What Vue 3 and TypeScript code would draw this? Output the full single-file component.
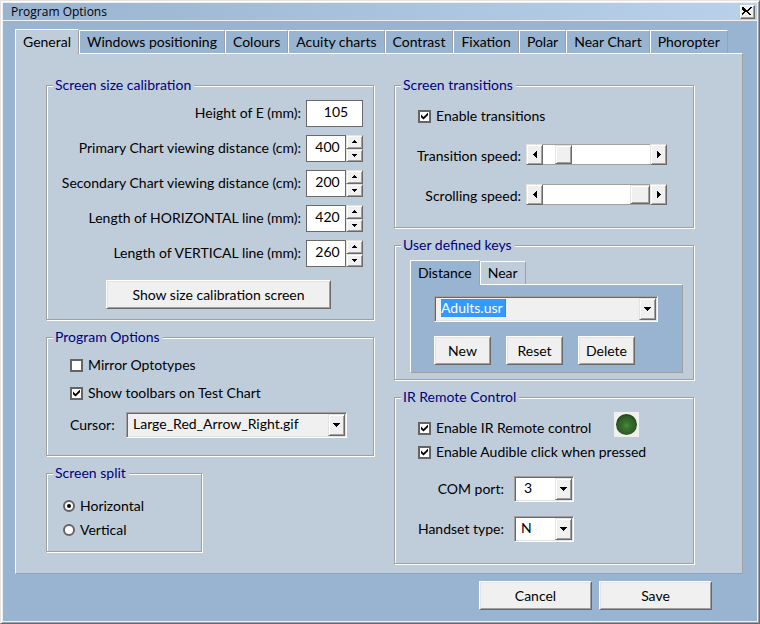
<script setup lang="ts">
import { reactive, ref } from 'vue'

interface Distance {
  id: string
  label: string
  value: number
  stepper: boolean
}

const tabs: string[] = [
  'General', 'Windows positioning', 'Colours', 'Acuity charts', 'Contrast',
  'Fixation', 'Polar', 'Near Chart', 'Phoropter',
]
const activeTab = ref('General')

const distances = reactive<Distance[]>([
  { id: 'height-e', label: 'Height of E (mm):', value: 105, stepper: false },
  { id: 'primary', label: 'Primary Chart viewing distance (cm):', value: 400, stepper: true },
  { id: 'secondary', label: 'Secondary Chart viewing distance (cm):', value: 200, stepper: true },
  { id: 'horizontal', label: 'Length of HORIZONTAL line (mm):', value: 420, stepper: true },
  { id: 'vertical', label: 'Length of VERTICAL line (mm):', value: 260, stepper: true },
])

const speeds = reactive([
  { id: 'transition', label: 'Transition speed:', value: 13, wide: false },
  { id: 'scrolling', label: 'Scrolling speed:', value: 100, wide: true },
])

const mirror = ref(false)
const toolbars = ref(true)
const cursor = ref('Large_Red_Arrow_Right.gif')
const split = ref('horizontal')
const transitions = ref(true)
const keyTab = ref('Distance')
const keyFile = ref('Adults.usr')
const remote = ref(true)
const click = ref(true)
const port = ref('3')
const handset = ref('N')

function nudge(speed: { value: number }, by: number): void {
  speed.value = Math.min(100, Math.max(0, speed.value + by))
}
</script>

<template>
  <div class="window">
    <header class="titlebar">
      <span class="title">Program Options</span>
      <button class="close" type="button" aria-label="Close">
        <svg width="10" height="8" viewBox="0 0 10 8" shape-rendering="crispEdges">
          <path d="M0 0h2v1h1v1h1v1h2v-1h1v-1h1v-1h2v1h-1v1h-1v1h-1v1h-1v1h1v1h1v1h1v1h-2v-1h-1v-1h-1v-1h-2v1h-1v1h-1v1h-2v-1h1v-1h1v-1h1v-1h-1v-1h-1v-1h-1z" />
        </svg>
      </button>
    </header>

    <main class="content">
      <div class="tabs" role="tablist">
        <button
          v-for="tab in tabs" :key="tab" type="button" role="tab" class="tab"
          :class="{ active: tab === activeTab }" :aria-selected="tab === activeTab"
          @click="activeTab = tab"
        >{{ tab }}</button>
      </div>

      <section class="panel">
        <div class="column">
          <fieldset>
            <legend>Screen size calibration</legend>
            <div class="distances">
              <div v-for="d in distances" :key="d.id" class="distance">
                <label :for="d.id">{{ d.label }}</label>
                <div class="number">
                  <input :id="d.id" v-model.number="d.value" type="text" inputmode="numeric">
                  <div v-if="d.stepper" class="stepper">
                    <button type="button" class="raised" aria-label="Increase" @click="d.value++">
                      <svg width="5" height="3" viewBox="0 0 5 3" shape-rendering="crispEdges"><path d="M2 0h1v1h1v1h1v1h-5v-1h1v-1h1z" /></svg>
                    </button>
                    <button type="button" class="raised" aria-label="Decrease" @click="d.value--">
                      <svg width="5" height="3" viewBox="0 0 5 3" shape-rendering="crispEdges"><path d="M0 0h5v1h-1v1h-1v1h-1v-1h-1v-1h-1z" /></svg>
                    </button>
                  </div>
                </div>
              </div>
            </div>
            <button type="button" class="button calibrate">Show size calibration screen</button>
          </fieldset>

          <fieldset>
            <legend>Program Options</legend>
            <div class="options">
              <label class="check"><input v-model="mirror" type="checkbox">Mirror Optotypes</label>
              <label class="check"><input v-model="toolbars" type="checkbox">Show toolbars on Test Chart</label>
              <div class="cursor-row">
                <label for="cursor">Cursor:</label>
                <div class="combo">
                  <select id="cursor" v-model="cursor"><option>Large_Red_Arrow_Right.gif</option></select>
                  <span class="arrow raised"><svg width="7" height="4" viewBox="0 0 7 4" shape-rendering="crispEdges"><path d="M0 0h7v1h-1v1h-1v1h-1v1h-1v-1h-1v-1h-1v-1h-1z" /></svg></span>
                </div>
              </div>
            </div>
          </fieldset>

          <fieldset class="split">
            <legend>Screen split</legend>
            <div class="radios">
              <label class="check"><input v-model="split" type="radio" name="split" value="horizontal">Horizontal</label>
              <label class="check"><input v-model="split" type="radio" name="split" value="vertical">Vertical</label>
            </div>
          </fieldset>
        </div>

        <div class="column">
          <fieldset>
            <legend>Screen transitions</legend>
            <div class="transitions">
              <label class="check"><input v-model="transitions" type="checkbox">Enable transitions</label>
              <div v-for="s in speeds" :key="s.id" class="speed">
                <label :for="s.id">{{ s.label }}</label>
                <div class="scroll">
                  <button type="button" class="raised" aria-label="Slower" @click="nudge(s, -5)">
                    <svg width="4" height="7" viewBox="0 0 4 7" shape-rendering="crispEdges"><path d="M3 0h1v7h-1v-1h-1v-1h-1v-1h-1v-1h1v-1h1v-1h1z" /></svg>
                  </button>
                  <input :id="s.id" v-model.number="s.value" type="range" min="0" max="100" :class="{ wide: s.wide }">
                  <button type="button" class="raised" aria-label="Faster" @click="nudge(s, 5)">
                    <svg width="4" height="7" viewBox="0 0 4 7" shape-rendering="crispEdges"><path d="M0 0h1v1h1v1h1v1h1v1h-1v1h-1v1h-1v1h-1z" /></svg>
                  </button>
                </div>
              </div>
            </div>
          </fieldset>

          <fieldset>
            <legend>User defined keys</legend>
            <div class="keys">
              <div class="tabs" role="tablist">
                <button
                  v-for="tab in ['Distance', 'Near']" :key="tab" type="button" role="tab" class="tab"
                  :class="{ active: tab === keyTab }" :aria-selected="tab === keyTab"
                  @click="keyTab = tab"
                >{{ tab }}</button>
              </div>
              <div class="keys-panel">
                <div class="combo">
                  <select v-model="keyFile" class="selected" aria-label="Key file"><option>Adults.usr</option></select>
                  <span class="arrow raised"><svg width="7" height="4" viewBox="0 0 7 4" shape-rendering="crispEdges"><path d="M0 0h7v1h-1v1h-1v1h-1v1h-1v-1h-1v-1h-1v-1h-1z" /></svg></span>
                </div>
                <div class="key-buttons">
                  <button type="button" class="button">New</button>
                  <button type="button" class="button">Reset</button>
                  <button type="button" class="button">Delete</button>
                </div>
              </div>
            </div>
          </fieldset>

          <fieldset>
            <legend>IR Remote Control</legend>
            <div class="remote">
              <div class="remote-top">
                <div class="remote-checks">
                  <label class="check"><input v-model="remote" type="checkbox">Enable IR Remote control</label>
                  <label class="check"><input v-model="click" type="checkbox">Enable Audible click when pressed</label>
                </div>
                <svg class="led" width="25" height="25" viewBox="0 0 25 25">
                  <defs>
                    <radialGradient id="led-fill" cx="50%" cy="55%" r="52%">
                      <stop offset="0" stop-color="#4a8a40" />
                      <stop offset="0.35" stop-color="#37702d" />
                      <stop offset="0.8" stop-color="#2f5c25" />
                      <stop offset="1" stop-color="#23421e" />
                    </radialGradient>
                  </defs>
                  <rect width="25" height="25" fill="#f0f0f0" />
                  <circle cx="12.5" cy="12.5" r="10.5" fill="url(#led-fill)" />
                </svg>
              </div>
              <div class="remote-row">
                <label for="port">COM port:</label>
                <div class="combo white">
                  <select id="port" v-model="port" class="numeric"><option>3</option></select>
                  <span class="arrow raised"><svg width="7" height="4" viewBox="0 0 7 4" shape-rendering="crispEdges"><path d="M0 0h7v1h-1v1h-1v1h-1v1h-1v-1h-1v-1h-1v-1h-1z" /></svg></span>
                </div>
              </div>
              <div class="remote-row">
                <label for="handset">Handset type:</label>
                <div class="combo white">
                  <select id="handset" v-model="handset"><option>N</option></select>
                  <span class="arrow raised"><svg width="7" height="4" viewBox="0 0 7 4" shape-rendering="crispEdges"><path d="M0 0h7v1h-1v1h-1v1h-1v1h-1v-1h-1v-1h-1v-1h-1z" /></svg></span>
                </div>
              </div>
            </div>
          </fieldset>
        </div>
      </section>
    </main>

    <footer class="footer">
      <button type="button" class="button">Cancel</button>
      <button type="button" class="button">Save</button>
    </footer>
  </div>
</template>

<style>
body {
  background: #99b4d1;
}
</style>

<style scoped>
* {
  box-sizing: border-box;
}

.window {
  --blue: #99b4d1;
  --panel: #bfcddb;
  --face: #f0f0f0;
  --shade: #a0a0a0;
  --dark: #696969;
  --lite: #e3e3e3;
  display: flex;
  flex-direction: column;
  min-height: 100vh;
  padding: 2px;
  border: 1px solid;
  border-color: var(--lite) var(--dark) var(--dark) var(--lite);
  box-shadow: inset 1px 1px #fff, inset -1px -1px var(--shade), inset 2px 2px var(--face), inset -2px -2px var(--face);
  background: var(--blue);
  color: #000;
  font: 14px/18px Lato, "Open Sans", sans-serif;
}

button, input, select {
  margin: 0;
  padding: 0;
  border: 0;
  border-radius: 0;
  color: #000;
  font: inherit;
}

.titlebar {
  display: flex;
  align-items: center;
  justify-content: space-between;
  height: 18px;
  padding: 0 2px 0 8px;
  border-bottom: 1px solid var(--face);
  background: linear-gradient(90deg, #99b4d1, #b9d1ea);
}

.title {
  font: 12px/16px "Open Sans", sans-serif;
}

.close {
  display: grid;
  place-items: center;
  width: 15px;
  height: 14px;
  padding: 0 1px 1px 0;
  border: 1px solid;
  border-color: #fff var(--dark) var(--dark) #fff;
  box-shadow: inset -1px -1px var(--shade);
  background: var(--face);
}

.content {
  flex: 1;
  display: flex;
  flex-direction: column;
  padding: 8px 14px 0 12px;
}

.tabs {
  display: flex;
  align-items: flex-end;
}

.tab {
  height: 23px;
  padding: 0 7px;
  border: 1px solid #fff;
  border-right-color: var(--shade);
  border-bottom: 0;
  border-radius: 1px 1px 0 0;
  background: var(--blue);
  white-space: nowrap;
}

.tab.active {
  z-index: 1;
  height: 25px;
  margin-bottom: -1px;
  background: var(--panel);
}

.panel {
  flex: 1;
  display: grid;
  grid-template-columns: 328fr 300fr;
  gap: 20px;
  padding: 22px 48px 9px 30px;
  border: 1px solid;
  border-color: #fff var(--shade) var(--shade) #fff;
  background: var(--panel);
}

.column {
  display: flex;
  flex-direction: column;
  gap: 8px;
}

fieldset {
  min-width: 0;
  margin: 0;
  padding: 0 10px 6px 6px;
  border: 1px solid var(--shade);
  box-shadow: 1px 1px #fff, inset 1px 1px #fff;
}

legend {
  height: 18px;
  padding: 0 3px 0 2px;
  background: var(--panel);
  color: #000080;
}

.distances {
  display: grid;
  gap: 8px;
  padding-top: 6px;
}

.distance {
  display: grid;
  grid-template-columns: 1fr 57px;
  gap: 5px;
  align-items: center;
}

.distance label {
  padding-bottom: 2px;
  text-align: right;
  white-space: nowrap;
}

.number {
  display: flex;
  height: 27px;
}

.number input {
  flex: 1;
  width: 0;
  padding: 0 0 3px 3px;
  border: 1px solid var(--dark);
  background: #fff;
  text-align: center;
}

.stepper {
  display: grid;
  grid-template-rows: 1fr 1fr;
  width: 17px;
}

.raised {
  display: grid;
  place-items: center;
  border: 1px solid;
  border-color: var(--lite) var(--dark) var(--dark) var(--lite);
  box-shadow: inset 1px 1px #fff, inset -1px -1px var(--shade);
  background: var(--face);
}

.button {
  height: 29px;
  border: 1px solid;
  border-color: #fff var(--dark) var(--dark) #fff;
  box-shadow: inset 1px 1px var(--lite), inset -1px -1px var(--shade);
  background: var(--face);
}

.calibrate {
  display: block;
  width: 225px;
  margin: 13px 32px 4px auto;
}

.check {
  display: flex;
  align-items: center;
  gap: 5px;
  white-space: nowrap;
}

.check input {
  appearance: none;
  display: grid;
  place-items: center;
  flex: none;
  width: 13px;
  height: 13px;
  border: 2px solid #646464;
  background: #fff;
}

.check input[type="checkbox"]:checked::before {
  content: "";
  width: 7px;
  height: 7px;
  background: #000;
  clip-path: polygon(0 29%, 36% 64%, 100% 0, 100% 40%, 36% 100%, 0 68%);
}

.check input[type="radio"] {
  width: 12px;
  height: 12px;
  border-radius: 50%;
}

.check input[type="radio"]:checked::before {
  content: "";
  width: 4px;
  height: 4px;
  border-radius: 50%;
  background: #000;
}

.options {
  display: grid;
  gap: 10px;
  padding: 10px 16px 11px 17px;
}

.cursor-row {
  display: flex;
  align-items: center;
  justify-content: space-between;
}

.cursor-row .combo {
  width: 221px;
}

.combo {
  display: grid;
  grid-template-columns: 1fr 17px;
  height: 26px;
  padding: 1px;
  border: 1px solid;
  border-color: var(--shade) #fff #fff var(--shade);
  box-shadow: inset 1px 1px var(--dark), inset -1px -1px var(--lite);
  background: var(--face);
}

.combo select {
  grid-area: 1 / 1 / 2 / 3;
  appearance: none;
  min-width: 0;
  padding: 0 17px 2px 5px;
  background: transparent;
}

.combo select.numeric {
  padding-left: 8px;
}

.combo select.selected {
  background: linear-gradient(90deg, #39f 64px, #c60 64px) no-repeat 5px 1px / 65px 18px;
  color: #fff;
}

.selected option {
  color: #000;
}

.arrow {
  grid-area: 1 / 2;
  pointer-events: none;
}

.combo.white {
  width: 60px;
  background: #fff;
}

.split {
  width: 156px;
}

.radios {
  display: grid;
  gap: 6px;
  padding: 15px 0 6px 10px;
}

.transitions {
  padding: 13px 10px 16px 17px;
}

.speed {
  display: flex;
  align-items: center;
  justify-content: space-between;
  padding-top: 19px;
}

.speed label {
  flex: 1;
  padding: 3px 5px 0 0;
  margin-left: -10px;
  text-align: right;
}

.scroll {
  display: flex;
  flex: none;
  width: 141px;
  height: 21px;
  margin-right: 6px;
}

.scroll button {
  width: 17px;
}

.scroll input {
  flex: 1;
  width: 0;
  appearance: none;
  border: 1px solid;
  border-color: var(--shade) transparent var(--shade);
  border-width: 1px 0;
  background: #fff;
}

.scroll input::-webkit-slider-thumb {
  appearance: none;
  width: 17px;
  height: 19px;
  border: 1px solid;
  border-color: var(--lite) var(--dark) var(--dark) var(--lite);
  box-shadow: inset 1px 1px #fff, inset -1px -1px var(--shade);
  background: var(--face);
}

.scroll input.wide::-webkit-slider-thumb {
  width: 20px;
}

.keys {
  padding: 6px 0 0 9px;
}

.keys .tab {
  background: var(--panel);
}

.keys .tab.active {
  background: var(--blue);
}

.keys-panel {
  padding: 11px 24px 7px 23px;
  border: 1px solid;
  border-color: #fff var(--shade) var(--shade) #fff;
  background: var(--blue);
}

.key-buttons {
  display: grid;
  grid-template-columns: repeat(3, 57px);
  gap: 15px;
  padding-top: 14px;
}

.remote {
  padding: 6px 0 15px;
}

.remote-top {
  display: flex;
  padding-left: 17px;
}

.remote-checks {
  display: grid;
  gap: 6px;
  width: 196px;
  padding: 7px 0 15px;
}

.led {
  flex: none;
}

.remote-row {
  display: flex;
  align-items: center;
  gap: 10px;
  height: 26px;
}

.remote-row + .remote-row {
  margin-top: 14px;
}

.remote-row label {
  width: 103px;
  text-align: right;
  white-space: nowrap;
}

.footer {
  display: grid;
  grid-template-columns: 113px 113px;
  justify-content: end;
  gap: 7px;
  padding: 7px 45px 11px;
}
</style>
